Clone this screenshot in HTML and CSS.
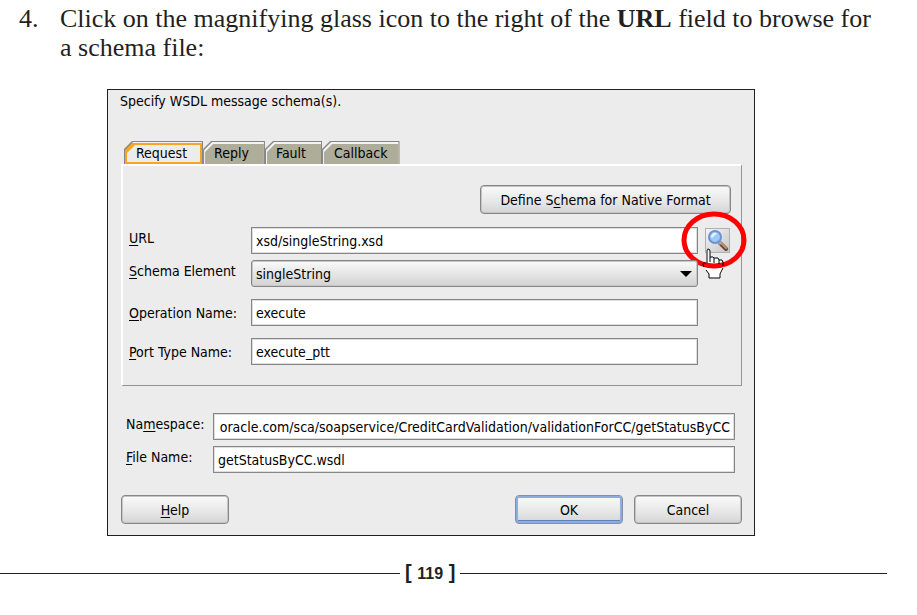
FILE: index.html
```html
<!DOCTYPE html>
<html lang="en">
<head>
    <meta charset="UTF-8">
    <meta name="viewport" content="width=device-width, initial-scale=1.0">
    <title>Specify WSDL message schema(s)</title>
    <link rel="stylesheet" href="styles.css">
</head>
<body>
    <ol class="steps" start="4">
        <li>Click on the magnifying glass icon to the right of the <b>URL</b> field to browse for a schema file:</li>
    </ol>

    <form class="dialog">
        <p class="intro">Specify WSDL message schema(s).</p>

        <div class="tabs" role="tablist">
            <button type="button" class="tab active" role="tab" aria-selected="true">Request</button>
            <button type="button" class="tab" role="tab">Reply</button>
            <button type="button" class="tab" role="tab">Fault</button>
            <button type="button" class="tab" role="tab">Callback</button>
        </div>

        <div class="panel" role="tabpanel">
            <button type="button" class="btn native">Define S<u>c</u>hema for Native Format</button>
            <div class="row">
                <label class="raised" for="url"><u>U</u>RL</label>
                <input type="text" id="url" value="xsd/singleString.xsd">
                <div class="browse">
                    <button type="button" class="search" aria-label="Browse">
                        <svg width="23" height="23" viewBox="0 0 23 23">
                            <path d="M14 14l6 6" stroke="#6d4638" stroke-width="4" stroke-linecap="round"/>
                            <path d="M14 13l6 6" stroke="#c08d72" stroke-width="2" stroke-linecap="round"/>
                            <path d="M12 12l3 3" stroke="#a9acb6" stroke-width="3"/>
                            <circle cx="9" cy="8" r="6" fill="#9cc8fa" stroke="#6d92d4" stroke-width="2"/>
                            <path d="M5 8a4 4 0 0 1 5-4c2 1-1 2-2 3s-2 3-3 1z" fill="#e6f4ff"/>
                        </svg>
                    </button>
                    <svg class="marker" width="68" height="72" viewBox="0 0 68 72">
                        <path d="M25 56V41q0-2 2-2t2 2v6h3l1 1h4l1 2h3l2 2v8l-3 4v4H28v-4l-6-9v-2z" fill="#fff"/>
                        <ellipse cx="33" cy="30" rx="30" ry="26" fill="none" stroke="#f00" stroke-width="5"/>
                        <path d="M26 53V41q0-2 1-2 2 0 2 2v11M29 47h3l1 1v5M33 48h4l1 2v4M38 50h3l1 2v4M25 53h-3v2l1 2M42 58l-3 6v4H28v-4l-3-4" fill="none" stroke="#000" stroke-width="1"/>
                    </svg>
                </div>
            </div>
            <div class="row">
                <label class="raised" for="element"><u>S</u>chema Element</label>
                <div class="select-wrap">
                    <select id="element">
                        <option>singleString</option>
                    </select>
                </div>
            </div>
            <div class="row spaced">
                <label for="operation"><u>O</u>peration Name:</label>
                <input type="text" id="operation" value="execute">
            </div>
            <div class="row spaced">
                <label for="portType"><u>P</u>ort Type Name:</label>
                <input type="text" id="portType" value="execute_ptt">
            </div>
        </div>

        <div class="file-info">
            <label class="raised" for="namespace">Na<u>m</u>espace:</label>
            <input type="text" id="namespace" class="show-end" value="oracle.com/sca/soapservice/CreditCardValidation/validationForCC/getStatusByCC">
            <label class="raised" for="fileName"><u>F</u>ile Name:</label>
            <input type="text" id="fileName" value="getStatusByCC.wsdl">
        </div>

        <div class="actions">
            <button type="button" class="btn help"><u>H</u>elp</button>
            <button type="button" class="btn ok">OK</button>
            <button type="button" class="btn">Cancel</button>
        </div>
    </form>

    <footer class="page-number"><span>[ <b>119</b> ]</span></footer>
</body>
</html>
```
FILE: styles.css
```css
* {
    box-sizing: border-box;
}
body {
    margin: 0;
    background: white;
    color: #231f20;
}
.steps {
    display: flow-root;
    margin: 0;
    padding: 4px 36px 0 60px;
    font: 26px/29px "Palatino Linotype", Palatino, "Liberation Serif", serif;
    list-style: none;
    counter-reset: step 3;
}
.steps li {
    position: relative;
    counter-increment: step;
}
.steps li::before {
    content: counter(step) ".";
    position: absolute;
    left: -41px;
}
.dialog {
    margin: 27px 162px 0 107px;
    padding: 3px 12px 11px 13px;
    border: 1px solid #231f20;
    background: #ececec;
    color: black;
}
.dialog, .dialog button, .dialog input, .dialog select {
    font-family: Tahoma, "DejaVu Sans Condensed", "DejaVu Sans", sans-serif;
    font-size: 14px;
    line-height: 16px;
}
.intro {
    margin: 0 0 32px -1px;
}
u {
    text-underline-offset: 2px;
}

/* tabs */
.tabs {
    display: flex;
    padding-left: 3px;
}
.tab {
    position: relative;
    isolation: isolate;
    height: 23px;
    padding: 0 16px 0 11px;
    border: none;
    background: #858585;
    color: black;
}
.tab:last-child {
    padding: 0 12px;
}
.tab::before, .tab::after {
    content: "";
    position: absolute;
    z-index: -1;
}
.tab::before {
    inset: 1px 1px 0 1px;
    background: #f4f4f4;
}
.tab::after {
    inset: 3px 1px 0 2px;
    background: #adad99;
}
.tab, .tab::before, .tab::after {
    clip-path: polygon(8px 0, 100% 0, 100% 100%, 0 100%, 0 8px);
}
.tab.active {
    padding: 0 16px 0 12px;
}
.tab.active::before {
    inset: 1px 1px 0 1px;
    background: linear-gradient(#f4f4f4 1px, #f5a623 1px);
}
.tab.active::after {
    inset: 4px 3px 2px 3px;
    background: #ececec;
}

/* tab content */
.panel {
    display: flex;
    flex-direction: column;
    gap: 6px;
    padding: 19px 10px 20px 6px;
    border: 2px solid;
    border-color: white #949494 #949494 white;
    border-right-width: 1px;
    border-bottom-width: 1px;
}
.row {
    display: flex;
    align-items: center;
    padding-right: 33px;
}
.row label {
    width: 122px;
    flex-shrink: 0;
}
.spaced {
    margin-top: 6px;
}
.raised {
    padding-bottom: 6px;
}
input, select {
    flex: 1;
    width: 100%;
    min-width: 0;
    height: 27px;
    padding: 0 4px;
    border: 1px solid #868686;
    border-radius: 0;
    background: white;
    box-shadow: inset 0 0 0 1px #dedede;
    color: black;
}
.show-end {
    direction: rtl;
}
.select-wrap {
    position: relative;
    flex: 1;
}
.select-wrap::after {
    content: "";
    position: absolute;
    right: 6px;
    top: 11px;
    border: 6px solid transparent;
    border-top-color: black;
    border-bottom: none;
    pointer-events: none;
}
select {
    display: block;
    appearance: none;
    border-radius: 3px;
    background: linear-gradient(#fafafa, #d2d2d2);
    box-shadow: inset 0 0 0 1px #c8c8c8;
}
.btn {
    width: 108px;
    height: 29px;
    padding: 0;
    border: 1px solid #868686;
    border-radius: 4px;
    background: linear-gradient(#fafafa, #e6e6e6 60%, #d4d4d4);
    box-shadow: inset 0 0 0 1px #c4c4c4;
    color: black;
}
.native {
    align-self: flex-end;
    width: 251px;
    margin-bottom: 7px;
}

/* browse button with the highlight around it */
.browse {
    position: relative;
    width: 25px;
    margin: 0 -32px 0 7px;
}
.search {
    display: block;
    width: 25px;
    height: 25px;
    padding: 0;
    border: 1px solid #b0b0b0;
    background: linear-gradient(135deg, #f4f4f4, #c8c8c8);
}
.search svg {
    display: block;
    fill: none;
}
.marker {
    position: absolute;
    left: -24px;
    top: -18px;
    pointer-events: none;
}

.file-info {
    display: grid;
    grid-template-columns: 87px 1fr;
    row-gap: 6px;
    align-items: center;
    margin: 27px 7px 22px 5px;
}
.actions {
    display: flex;
    gap: 11px;
}
.help {
    margin-right: auto;
}
.ok {
    border-color: #868fa0;
    box-shadow: inset 0 0 0 2px #8bade3, inset 0 -3px 0 #5c80c0;
}

.page-number {
    display: flex;
    align-items: center;
    gap: 5px;
    margin: 26px 30px 0 0;
    font: bold 20px/20px "Liberation Sans", Arial, sans-serif;
}
.page-number b {
    font-size: 16px;
}
.page-number::before, .page-number::after {
    content: "";
    flex: 15;
    height: 1px;
    background: #231f20;
}
.page-number::after {
    flex: 16;
}
```
